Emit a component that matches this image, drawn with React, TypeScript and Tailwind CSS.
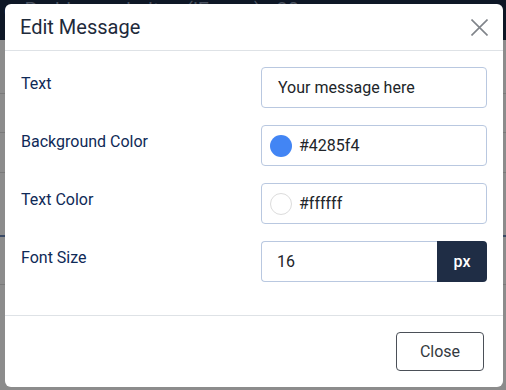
const Backdrop = () => (
  <div className="absolute inset-0 flex flex-col bg-[#8c8c8c]">
    <div className="h-[40px] bg-[#0e1726] px-1 text-[20px] leading-[20px] text-[#4a5260]">
      e: Problemverhalten (iFrame) - 30
    </div>
    <div className="h-[54px] border-b border-[#7a7a7a]" />
    <div className="h-[39px] border-b border-[#7a7a7a]" />
    <div className="h-[40px] border-b border-[#7a7a7a]" />
    <div className="h-[64px] border-b-2 border-[#3a4a66]" />
    <div className="h-[48px] border-b border-[#7a7a7a]" />
  </div>
);

const Label = ({ children }: { children: React.ReactNode }) => (
  <label className="w-[240px] shrink-0 pt-[5px] text-[16px] leading-[24px] text-[#0f2a57]">
    {children}
  </label>
);

const ColorField = ({ color, border }: { color: string; border?: boolean }) => (
  <div className="flex h-[41px] flex-1 items-center rounded-[4px] border border-[#b9c8e0] bg-white pl-[8px]">
    <span
      className={
        border
          ? "h-[22px] w-[22px] rounded-full border border-[#dcdcdc]"
          : "h-[22px] w-[22px] rounded-full"
      }
      style={{ backgroundColor: color }}
    />
    <span className="ml-[7px] text-[16px] text-[#212529]">{color}</span>
  </div>
);

export default function App() {
  return (
    <div className="relative h-[390px] w-[506px] overflow-hidden font-['Roboto',sans-serif]">
      <Backdrop />
      <div className="absolute left-[5px] top-[4px] flex h-[383px] w-[498px] flex-col rounded-[6px] bg-white">
        <div className="flex h-[47px] items-center justify-between border-b border-[#dee2e6] pl-[15px] pr-[15px]">
          <h2 className="text-[20px] font-normal text-[#1e2a3b]">Edit Message</h2>
          {/* close icon */}
          <svg width="17" height="17" viewBox="0 0 17 17" className="text-[#80848a]">
            <path d="M0.5 0.5 L16.5 16.5 M16.5 0.5 L0.5 16.5" stroke="currentColor" strokeWidth="1.6" />
          </svg>
        </div>

        <div className="flex flex-1 flex-col gap-[17px] px-[16px] pt-[16px]">
          <div className="flex items-start">
            <Label>Text</Label>
            <div className="flex h-[41px] flex-1 items-center rounded-[4px] border border-[#b9c8e0] px-[16px] text-[16px] text-[#212529]">
              Your message here
            </div>
          </div>
          <div className="flex items-start">
            <Label>Background Color</Label>
            <ColorField color="#4285f4" />
          </div>
          <div className="flex items-start">
            <Label>Text Color</Label>
            <ColorField color="#ffffff" border />
          </div>
          <div className="flex items-start">
            <Label>Font Size</Label>
            <div className="flex h-[41px] flex-1">
              <div className="flex flex-1 items-center rounded-l-[4px] border border-r-0 border-[#b9c8e0] px-[15px] text-[16px] text-[#212529]">
                16
              </div>
              <div className="flex w-[50px] items-center justify-center rounded-r-[4px] bg-[#1f2d45] text-[16px] font-medium text-white">
                px
              </div>
            </div>
          </div>
        </div>

        <div className="flex h-[72px] items-center justify-end border-t border-[#dee2e6] pr-[19px]">
          <button className="h-[39px] w-[88px] rounded-[4px] border border-[#4b5058] text-[16px] text-[#343a40]">
            Close
          </button>
        </div>
      </div>
    </div>
  );
}
